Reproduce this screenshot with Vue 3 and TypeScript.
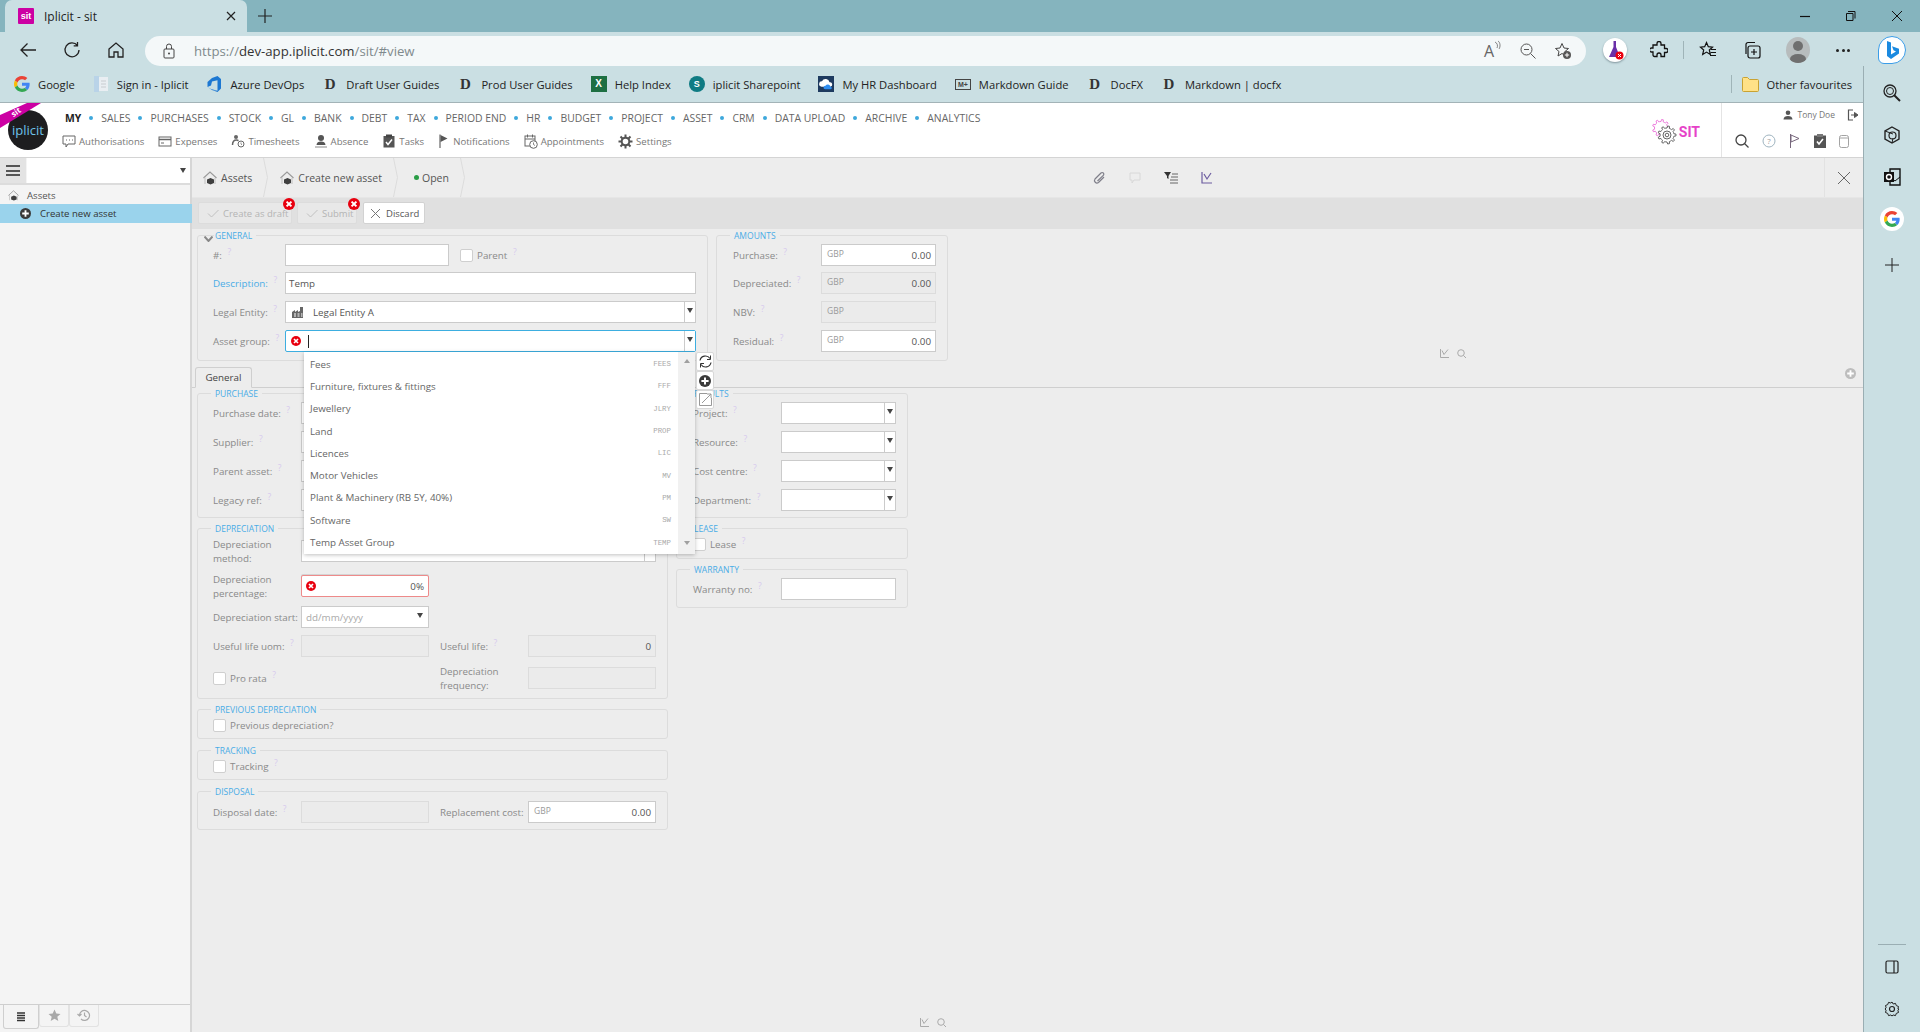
<template>
  <div class="page">
    <svg class="defs" width="0" height="0">
      <symbol id="err" viewBox="0 0 12 12">
        <circle cx="6" cy="6" r="6" fill="#e8000f" />
        <path d="M3.6 3.6l4.8 4.8M8.4 3.6l-4.8 4.8" stroke="#fff" stroke-width="2" />
      </symbol>
      <symbol id="plusdark" viewBox="0 0 12 12">
        <circle cx="6" cy="6" r="6" fill="#3a3a3a" />
        <path d="M6 2.400v7.200M2.400 6h7.200" stroke="#fff" stroke-width="2" />
      </symbol>
      <symbol id="house" viewBox="0 0 14 14">
        <path d="M.5 7L7 1l6.500 6" fill="none" stroke="#9a9a9a" stroke-width="1.100" />
        <path d="M2 6.500V13M12 7v6" stroke="#c4c4c4" stroke-width="1.100" />
        <path d="M4 8.500l3.500-1.500 3.500 1.500v3.500L7.500 13.500 4 12z" fill="#3f3f3f" />
      </symbol>
    </svg>

    <!-- browser chrome -->
    <div class="tabstrip">
      <div class="tab">
        <span class="favicon">sit</span>
        <span class="tab-title">Iplicit - sit</span>
        <svg class="tab-x" width="10" height="10" viewBox="0 0 10 10"><path d="M1 1l8 8M9 1l-8 8" stroke="#222" stroke-width="1.200" /></svg>
      </div>
      <svg class="tab-new" width="16" height="16" viewBox="0 0 16 16"><path d="M8 1v14M1 8h14" stroke="#222" stroke-width="1.200" /></svg>
      <div class="win">
        <svg width="12" height="12" viewBox="0 0 12 12"><path d="M1 6.500h10" stroke="#111" stroke-width="1.200" /></svg>
        <svg width="12" height="12" viewBox="0 0 12 12"><path d="M3 1.500h7v7M1.500 3.500h6.500v7h-6.500z" fill="none" stroke="#111" /></svg>
        <svg width="12" height="12" viewBox="0 0 12 12"><path d="M1 1l10 10M11 1l-10 10" stroke="#111" /></svg>
      </div>
    </div>

    <div class="toolbar">
      <svg class="tb-back" width="18" height="18" viewBox="0 0 18 18"><path d="M17 9H2M8.500 2.500L2 9l6.500 6.500" fill="none" stroke="#222" stroke-width="1.300" /></svg>
      <svg class="tb-reload" width="18" height="18" viewBox="0 0 18 18"><path d="M14.500 4.500A7 7 0 1 0 16 9M14.500 1v3.800h-3.800" fill="none" stroke="#222" stroke-width="1.300" /></svg>
      <svg class="tb-home" width="18" height="18" viewBox="0 0 18 18"><path d="M2 8l7-6 7 6v8h-5v-5H7v5H2z" fill="none" stroke="#222" stroke-width="1.300" /></svg>
      <div class="address">
        <svg width="14" height="16" viewBox="0 0 14 16"><rect x="2" y="6" width="10" height="9" rx="1" fill="none" stroke="#444" /><path d="M4.500 6V3.500a2.500 2.500 0 0 1 5 0V6" fill="none" stroke="#444" /><circle cx="7" cy="10.500" r="1" fill="#444" /></svg>
        <span class="url"><span class="dim">https://</span>dev-app.iplicit.com<span class="dim">/sit/#view</span></span>
        <div class="addr-right">
          <span class="aloud">A<svg width="7" height="12" viewBox="0 0 7 12"><path d="M1 2c2.500 1 3 4 2 6M4 1c2.500 1.500 2.500 6 1 8" fill="none" stroke="#666" stroke-width="0.800" /></svg></span>
          <svg width="16" height="16" viewBox="0 0 16 16"><circle cx="6.500" cy="6.500" r="5.500" fill="none" stroke="#555" /><path d="M10.500 10.500l5 5M4 6.500h5" stroke="#555" /></svg>
          <svg width="18" height="18" viewBox="0 0 18 18"><path d="M8 1.500l2 4.500 4.500.5-3.500 3 1 4.500-4-2.500-4 2.500 1-4.500-3.500-3 4.500-.5z" fill="none" stroke="#444" /><circle cx="13" cy="13" r="4" fill="#555" /><path d="M13 10.800v4.400M10.800 13h4.400" stroke="#fff" /></svg>
        </div>
      </div>
      <div class="tb-right">
        <span class="flask">
          <svg width="24" height="24" viewBox="0 0 24 24"><path d="M9.500 3h4M10.500 3v6L6 19h11l-4-10V3z" fill="#6a2fa8" /><circle cx="16.500" cy="17.500" r="4" fill="#e8000f" /><path d="M15 16l3 3M18 16l-3 3" stroke="#fff" /></svg>
        </span>
        <svg class="tb-ext" width="18" height="18" viewBox="0 0 18 18"><path d="M7 2.500a2 2 0 0 1 4 0V4h3.500v3.500H16a2 2 0 0 1 0 4h-1.500V15.500H11V14a2 2 0 0 0-4 0v1.500H4.500A1.500 1.500 0 0 1 3 14v-3H1.500a2 2 0 0 1 0-4H3V4h4z" fill="none" stroke="#111" stroke-width="1.300" /></svg>
        <span class="tb-sep"></span>
        <svg class="tb-fav" width="18" height="18" viewBox="0 0 18 18"><path d="M7.500 1.500l1.800 4.200 4.200.4-3.200 2.900 1 4.400-3.800-2.300-3.800 2.300 1-4.400L1.500 6.100l4.200-.4z" fill="none" stroke="#111" stroke-width="1.200" /><path d="M12 8.500h5M11.500 11.500h5.500M11 14.500h6" stroke="#111" /></svg>
        <svg class="tb-coll" width="18" height="18" viewBox="0 0 18 18"><rect x="5" y="5" width="12" height="12" rx="2" fill="none" stroke="#111" stroke-width="1.200" /><path d="M11 8v6M8 11h6M3 13V3.500A2 2 0 0 1 5 1.500h7" fill="none" stroke="#111" stroke-width="1.200" /></svg>
        <span class="avatar"><svg width="24" height="26" viewBox="0 0 24 26"><circle cx="12" cy="9" r="5" fill="#6f6f6f" /><ellipse cx="12" cy="22" rx="8" ry="5" fill="#6f6f6f" /></svg></span>
        <span class="tb-dots"><i></i><i></i><i></i></span>
        <span class="bing">
          <svg width="26" height="26" viewBox="0 0 26 26"><path d="M8 4l4 1.500v12l5-3-2.500-1.200-1.500-4 7 2.500v4.700L12 22l-4-3z" fill="#1b8ae0" /></svg>
        </span>
      </div>
    </div>

    <div class="below">
      <div class="app">
        <div class="bookmarks">
          <div v-for="b in bookmarks" :key="b.label" class="mark">
            <svg v-if="b.kind === 'google'" width="16" height="16" viewBox="0 0 48 48">
              <path fill="#EA4335" d="M24 9.500c3.540 0 6.710 1.220 9.210 3.600l6.850-6.850C35.900 2.380 30.470 0 24 0 14.620 0 6.510 5.380 2.560 13.220l7.980 6.190C12.430 13.720 17.740 9.500 24 9.500z" />
              <path fill="#4285F4" d="M46.980 24.550c0-1.570-.15-3.090-.38-4.550H24v9.020h12.940c-.58 2.960-2.260 5.480-4.780 7.180l7.730 6c4.510-4.180 7.090-10.360 7.090-17.650z" />
              <path fill="#FBBC05" d="M10.530 28.590c-.48-1.450-.76-2.990-.76-4.590s.27-3.140.76-4.590l-7.980-6.190C.92 16.460 0 20.120 0 24c0 3.880.92 7.540 2.560 10.780l7.970-6.190z" />
              <path fill="#34A853" d="M24 48c6.480 0 11.930-2.130 15.890-5.810l-7.730-6c-2.150 1.450-4.920 2.300-8.160 2.300-6.260 0-11.570-4.220-13.470-9.910l-7.980 6.190C6.510 42.620 14.620 48 24 48z" />
            </svg>
            <svg v-else-if="b.kind === 'page'" width="16" height="16" viewBox="0 0 16 16"><rect x="1" y="0" width="5" height="16" fill="#b9d3e8" /><rect x="6" y="1" width="9" height="14" fill="#e9eef2" /><path d="M8 5h5M8 8h5M8 11h5" stroke="#c8ccd0" /></svg>
            <svg v-else-if="b.kind === 'azure'" width="16" height="16" viewBox="0 0 16 16"><path d="M15 3v9.500L11.500 16 6 14l5.500.7V4.300L6 5.500 5 9.500 1.500 11V6L6 2 11.500 0z" fill="#1d78d2" /><path d="M1.500 11L6 14l5.500.7L5 13z" fill="#1d78d2" /></svg>
            <span v-else-if="b.kind === 'd'" class="ic-d">D</span>
            <span v-else-if="b.kind === 'excel'" class="ic-excel">X</span>
            <span v-else-if="b.kind === 'share'" class="ic-share">S</span>
            <svg v-else-if="b.kind === 'hr'" width="16" height="16" viewBox="0 0 18 18"><rect width="18" height="18" fill="#1e3a5f" /><path d="M4 12a3 3 0 0 1 .5-6A4.500 4.500 0 0 1 13 7a2.500 2.500 0 0 1 1 5z" fill="#fff" /><path d="M8 15a2 2 0 0 1 .5-4 3 3 0 0 1 5.500 1 1.500 1.500 0 0 1 0 3z" fill="#2e8df0" /></svg>
            <span v-else-if="b.kind === 'md'" class="ic-md">M+</span>
            <span class="mark-label">{{ b.label }}</span>
          </div>
          <div class="other">
            <svg width="17" height="16" viewBox="0 0 17 16"><path d="M.5 2.500a1 1 0 0 1 1-1h4l2 2h8a1 1 0 0 1 1 1v10a1 1 0 0 1-1 1h-14a1 1 0 0 1-1-1z" fill="#ffe187" stroke="#c9a232" /></svg>
            <span class="mark-label">Other favourites</span>
          </div>
        </div>

        <!-- iplicit header -->
        <div class="hdr">
          <div class="logo"><span>iplicit</span></div>
          <svg class="ribbon" width="42" height="26" viewBox="0 0 42 26"><path d="M0 12L27 0h14L0 25z" fill="#cc00a3" /></svg>
          <span class="ribbon-text">sit</span>
          <div class="hdr-nav">
            <div class="nav-main">
              <template v-for="(item, i) in modules" :key="item">
                <span v-if="i > 0" class="nav-dot"></span>
                <span :class="['nav-item', { on: item === 'MY' }]">{{ item }}</span>
              </template>
            </div>
            <div class="nav-sub">
              <span class="sub">
                <svg width="14" height="13" viewBox="0 0 14 13"><path d="M1 1h12v8H6l-2 3V9H1z" fill="none" stroke="#666" /><path d="M4 5h1M7 5h1M10 5h1" stroke="#666" /></svg>Authorisations
              </span>
              <span class="sub">
                <svg width="14" height="13" viewBox="0 0 14 13"><rect x="1" y="2" width="12" height="9" fill="none" stroke="#666" /><path d="M1 4.500h12" stroke="#666" stroke-width="1.500" /><path d="M3 8h3" stroke="#666" /></svg>Expenses
              </span>
              <span class="sub">
                <svg width="14" height="14" viewBox="0 0 14 14"><circle cx="5" cy="3" r="2" fill="#666" /><path d="M1.500 11c0-4 2-5 4-5 .8 0 1.500.2 2 .6" fill="none" stroke="#666" stroke-width="1.500" /><circle cx="10" cy="10" r="3" fill="none" stroke="#666" /><path d="M10 8.500V10l1 1" stroke="#666" stroke-width="0.700" fill="none" /></svg>Timesheets
              </span>
              <span class="sub">
                <svg width="14" height="14" viewBox="0 0 14 14"><circle cx="7" cy="4" r="3" fill="#555" /><path d="M2.500 11c0-2.500 2-3.500 4.500-3.500s4.500 1 4.500 3.500z" fill="#555" /><path d="M1 13h12" stroke="#888" /></svg>Absence
              </span>
              <span class="sub">
                <svg width="14" height="14" viewBox="0 0 14 14"><path d="M1.500 2h11v11.500h-11z" fill="#555" /><path d="M4 0.500h6v3H4z" fill="#444" /><path d="M4 8l2 2.500 4-5" fill="none" stroke="#fff" stroke-width="1.500" /></svg>Tasks
              </span>
              <span class="sub">
                <svg width="12" height="14" viewBox="0 0 12 14"><path d="M2 0.500V14" stroke="#666" stroke-width="1.200" /><path d="M2.500 1l7 3.500-7 3.500z" fill="#555" /></svg>Notifications
              </span>
              <span class="sub">
                <svg width="14" height="15" viewBox="0 0 14 15"><rect x="1" y="2" width="10" height="10" fill="none" stroke="#666" /><path d="M1 5h10M3.500 0.500v3M8.500 0.500v3" stroke="#666" /><circle cx="9.500" cy="10.500" r="3.800" fill="#fff" stroke="#666" /><path d="M9.500 8.500v2l1.500 1" fill="none" stroke="#666" stroke-width="0.800" /></svg>Appointments
              </span>
              <span class="sub">
                <svg width="15" height="15" viewBox="0 0 15 15"><circle cx="7.500" cy="7.500" r="3.800" fill="none" stroke="#555" stroke-width="2" /><path d="M7.500 .5v3M7.500 11.500v3M.5 7.500h3M11.500 7.500h3M2.500 2.500l2.200 2.200M10.300 10.300l2.200 2.200M12.500 2.500l-2.200 2.200M4.700 10.300l-2.200 2.200" stroke="#555" stroke-width="2" /></svg>Settings
              </span>
            </div>
          </div>
          <div class="env">
            <svg width="26" height="28" viewBox="0 0 26 28">
              <path :d="gearPink" fill="none" stroke="#ea6fd8" stroke-width="0.900" />
              <path :d="gearGrey" fill="#fff" stroke="#666" stroke-width="1" />
              <circle cx="15" cy="17" r="4" fill="none" stroke="#666" /><circle cx="15" cy="17" r="1.800" fill="none" stroke="#666" />
            </svg>
            <span>SIT</span>
          </div>
          <div class="user-box">
            <div class="user-line">
              <svg width="10" height="10" viewBox="0 0 10 10"><circle cx="5" cy="2.800" r="2.300" fill="#555" /><path d="M.5 9.500c0-2.500 2-3.500 4.500-3.500s4.500 1 4.500 3.500z" fill="#555" /></svg>
              <span class="user-name">Tony Doe</span>
              <svg class="logout" width="12" height="12" viewBox="0 0 12 12"><path d="M6 1H1.500v10H6" fill="none" stroke="#555" stroke-width="1.200" /><path d="M4 6h4.500M7.500 3.500L11 6l-3.500 2.500z" fill="#555" stroke="#555" /></svg>
            </div>
            <div class="user-icons">
              <svg width="14" height="14" viewBox="0 0 14 14"><circle cx="6" cy="6" r="5" fill="none" stroke="#444" stroke-width="1.300" /><path d="M9.500 9.500l4 4" stroke="#444" stroke-width="1.300" /></svg>
              <svg width="14" height="14" viewBox="0 0 14 14"><circle cx="7" cy="7" r="6" fill="none" stroke="#9fb4c0" /><text x="7" y="10" text-anchor="middle" font-size="8" font-family="Open Sans" fill="#9a9a9a">?</text></svg>
              <svg width="12" height="14" viewBox="0 0 12 14"><path d="M1.500 0v14" stroke="#77677c" /><path d="M2 1l8 3.500-8 3.500z" fill="none" stroke="#77677c" /></svg>
              <svg width="12" height="14" viewBox="0 0 12 14"><path d="M0 1.500h12V14H0z" fill="#555" /><path d="M3 0h6v3H3z" fill="#777" /><path d="M3 7.500l2 2.500 4-5" fill="none" stroke="#fff" stroke-width="1.600" /></svg>
              <svg width="10" height="13" viewBox="0 0 10 13"><rect x="0.500" y="0.500" width="9" height="12" rx="2" fill="none" stroke="#a3a3a3" /><path d="M0.500 3h9" stroke="#a3a3a3" /></svg>
            </div>
          </div>
        </div>

        <div class="work">
          <!-- left tree -->
          <div class="left">
            <div class="left-top">
              <div class="burger"><i></i><i></i><i></i></div>
              <div class="left-combo"><span class="caret"></span></div>
            </div>
            <div class="tree-row root">
              <svg width="11" height="11"><use href="#house" /></svg>
              <span>Assets</span>
            </div>
            <div class="tree-row sel">
              <svg width="11" height="11"><use href="#plusdark" /></svg>
              <span>Create new asset</span>
            </div>
            <div class="left-tabs">
              <span class="ltab active">
                <svg width="10" height="10" viewBox="0 0 10 10"><path d="M1 1h8M1 3.500h8M1 6h8M1 8.500h8" stroke="#333" stroke-width="1.500" /></svg>
              </span>
              <span class="ltab">
                <svg width="13" height="13" viewBox="0 0 13 13"><path d="M6.500 .5l1.800 4 4.200.4-3.200 2.900 1 4.200-3.800-2.200-3.800 2.200 1-4.200L.5 4.900l4.200-.4z" fill="#a9a9a9" /></svg>
              </span>
              <span class="ltab">
                <svg width="14" height="13" viewBox="0 0 14 13"><path d="M2.500 6.500a5 5 0 1 1 1.500 3.500M.5 5l2 2 2-2M7.500 3.500v3l2 1.500" fill="none" stroke="#a9a9a9" stroke-width="1.200" /></svg>
              </span>
            </div>
          </div>

          <div class="main">
            <div class="crumbs">
              <span class="crumb"><svg width="14" height="14"><use href="#house" /></svg>Assets</span>
              <svg class="chev" width="5" height="39" viewBox="0 0 5 39"><path d="M.5 0L4.500 19.500.5 39" fill="none" stroke="#dcdcdc" /></svg>
              <span class="crumb two"><svg width="14" height="14"><use href="#house" /></svg>Create new asset</span>
              <svg class="chev" width="5" height="39" viewBox="0 0 5 39"><path d="M.5 0L4.500 19.500.5 39" fill="none" stroke="#dcdcdc" /></svg>
              <span class="crumb three"><i class="green"></i>Open</span>
              <svg class="chev" width="5" height="39" viewBox="0 0 5 39"><path d="M.5 0L4.500 19.500.5 39" fill="none" stroke="#dcdcdc" /></svg>
              <div class="crumb-tools">
                <svg width="14" height="14" viewBox="0 0 14 14"><path d="M12 6l-5.500 5.500a2.500 2.500 0 0 1-3.500-3.500L9 2a1.600 1.600 0 0 1 2.300 2.300L5.500 10" fill="none" stroke="#7f7f8a" stroke-width="1.200" /></svg>
                <svg width="12" height="12" viewBox="0 0 12 12"><path d="M1 1h10v7H5l-2 3V8H1z" fill="none" stroke="#d8d8d8" /></svg>
                <svg width="14" height="13" viewBox="0 0 14 13"><path d="M0 1h7L4.500 5v3L3 7V5z" fill="#333" /><path d="M8 3h6M7 6h7M6 9h8M6 12h8" stroke="#666" /></svg>
                <svg width="11" height="12" viewBox="0 0 11 12"><path d="M1 0v11h10M3 2l3 5 4-6" fill="none" stroke="#6c5ca0" stroke-width="1.200" /></svg>
              </div>
              <div class="close-cell">
                <svg width="14" height="14" viewBox="0 0 14 14"><path d="M1 1l12 12M13 1L1 13" stroke="#666" /></svg>
              </div>
            </div>

            <div class="actions">
              <button class="btn off draft">
                <svg width="12" height="9" viewBox="0 0 12 9"><path d="M1 4.500l3.500 3.500 7-7" fill="none" stroke="#c0c0c0" /></svg>Create as draft
                <svg class="badge" width="12" height="12"><use href="#err" /></svg>
              </button>
              <button class="btn off submit">
                <svg width="12" height="9" viewBox="0 0 12 9"><path d="M1 4.500l3.500 3.500 7-7" fill="none" stroke="#c0c0c0" /></svg>Submit
                <svg class="badge" width="12" height="12"><use href="#err" /></svg>
              </button>
              <button class="btn discard">
                <svg width="11" height="11" viewBox="0 0 11 11"><path d="M1 1l9 9M10 1l-9 9" stroke="#777" /></svg>Discard
              </button>
            </div>

            <div class="content">
              <div class="top">
                <div class="fs general">
                  <svg class="fold" width="9" height="6" viewBox="0 0 9 6"><path d="M.5 .5L4.500 5l4-4.500" fill="none" stroke="#888" stroke-width="2" /></svg>
                  <span class="legend gen-legend">GENERAL</span>
                  <div class="rows">
                    <div class="row first">
                      <label class="lab short">#: <sup class="q">?</sup></label>
                      <span class="inp w164"></span>
                      <span class="chk parent-chk"></span>
                      <span class="chk-text">Parent <sup class="q">?</sup></span>
                    </div>
                    <div class="row">
                      <label class="lab short blue">Description: <sup class="q">?</sup></label>
                      <span class="inp grow val">Temp</span>
                    </div>
                    <div class="row">
                      <label class="lab short">Legal Entity: <sup class="q">?</sup></label>
                      <span class="inp grow combo val">
                        <svg class="factory" width="12" height="11" viewBox="0 0 12 11"><path d="M0 11V5l3-2v2l3-2v2l2-1V0h3v11z" fill="#666" /><path d="M2 7h2M5.500 7h2M9 7h1.500M2 9h2M5.500 9h2M9 9h1.500" stroke="#fff" /></svg>
                        Legal Entity A
                        <span class="drop"><span class="caret"></span></span>
                      </span>
                    </div>
                    <div class="row">
                      <label class="lab short">Asset group: <sup class="q">?</sup></label>
                      <span class="inp grow combo focus">
                        <svg class="err-inline" width="10" height="10"><use href="#err" /></svg>
                        <i class="cursor"></i>
                        <span class="drop"><span class="caret"></span></span>
                        <div class="popup">
                          <div class="pop-list">
                            <div v-for="g in groups" :key="g.code" class="pop-item">
                              <span>{{ g.name }}</span>
                              <span class="pop-code">{{ g.code }}</span>
                            </div>
                          </div>
                          <div class="pop-scroll">
                            <span class="up"></span>
                            <span class="down"></span>
                          </div>
                        </div>
                        <div class="pop-side">
                          <span class="side-btn"><svg width="13" height="13" viewBox="0 0 13 13"><path d="M1 5.500a5.500 5.500 0 0 1 10-2M12 7.500a5.500 5.500 0 0 1-10 2" fill="none" stroke="#333" stroke-width="1.200" /><path d="M11.500 0.500v4h-3.500M1.500 12.500v-4H5" fill="none" stroke="#333" /></svg></span>
                          <span class="side-btn"><svg width="12" height="12"><use href="#plusdark" /></svg></span>
                          <span class="side-btn"><svg width="13" height="13" viewBox="0 0 13 13"><path d="M8 .5H.5v12h12V5M3 10L12 1M8 1h4v4" fill="none" stroke="#999" /></svg></span>
                        </div>
                      </span>
                    </div>
                  </div>
                </div>

                <div class="fs amounts">
                  <span class="legend">AMOUNTS</span>
                  <div class="rows">
                    <div class="row first">
                      <label class="lab">Purchase: <sup class="q">?</sup></label>
                      <span class="inp money"><em>GBP</em><b>0.00</b></span>
                    </div>
                    <div class="row">
                      <label class="lab">Depreciated: <sup class="q">?</sup></label>
                      <span class="inp money ro"><em>GBP</em><b>0.00</b></span>
                    </div>
                    <div class="row">
                      <label class="lab">NBV: <sup class="q">?</sup></label>
                      <span class="inp money ro"><em>GBP</em></span>
                    </div>
                    <div class="row">
                      <label class="lab">Residual: <sup class="q">?</sup></label>
                      <span class="inp money"><em>GBP</em><b>0.00</b></span>
                    </div>
                  </div>
                </div>

                <div class="mini-tools">
                  <svg width="9" height="9" viewBox="0 0 9 9"><path d="M.5 0v8.500H9M2 1.500l2 4 4-5" fill="none" stroke="#aaa" /></svg>
                  <svg width="9" height="9" viewBox="0 0 9 9"><circle cx="4" cy="4" r="3.300" fill="none" stroke="#aaa" /><path d="M6.500 6.500L9 9" stroke="#aaa" /></svg>
                </div>
              </div>

              <div class="tabbar">
                <span class="tabbtn">General</span>
                <svg class="tab-plus" width="11" height="11" viewBox="0 0 12 12"><circle cx="6" cy="6" r="6" fill="#bdbdbd" /><path d="M6 2.400v7.200M2.400 6h7.200" stroke="#fff" stroke-width="2" /></svg>
              </div>

              <div class="lower">
                <div class="col-left">
                  <div class="fs purchase">
                    <span class="legend">PURCHASE</span>
                    <div class="rows">
                      <div class="row"><label class="lab">Purchase date: <sup class="q">?</sup></label><span class="inp w129"></span></div>
                      <div class="row"><label class="lab">Supplier: <sup class="q">?</sup></label><span class="inp grow"></span></div>
                      <div class="row"><label class="lab">Parent asset: <sup class="q">?</sup></label><span class="inp grow"></span></div>
                      <div class="row"><label class="lab">Legacy ref: <sup class="q">?</sup></label><span class="inp w129"></span></div>
                    </div>
                  </div>

                  <div class="fs deprec">
                    <span class="legend">DEPRECIATION</span>
                    <div class="rows">
                      <div class="row"><label class="lab">Depreciation method:</label><span class="inp grow combo"><span class="drop"></span></span></div>
                      <div class="row m13">
                        <label class="lab">Depreciation percentage:</label>
                        <span class="inp w129 bad"><svg class="err-inline" width="10" height="10"><use href="#err" /></svg><b>0%</b></span>
                      </div>
                      <div class="row m9">
                        <label class="lab nowrap">Depreciation start:</label>
                        <span class="inp w129 date">dd/mm/yyyy<span class="caret"></span></span>
                      </div>
                      <div class="row">
                        <label class="lab">Useful life uom: <sup class="q">?</sup></label>
                        <span class="inp w129 ro"></span>
                        <label class="lab second">Useful life: <sup class="q">?</sup></label>
                        <span class="inp w129 ro num">0</span>
                      </div>
                      <div class="row m10">
                        <span class="chk"></span>
                        <span class="chk-text pro">Pro rata <sup class="q">?</sup></span>
                        <label class="lab second">Depreciation frequency:</label>
                        <span class="inp w129 ro"></span>
                      </div>
                    </div>
                  </div>

                  <div class="fs thin prev">
                    <span class="legend">PREVIOUS DEPRECIATION</span>
                    <div class="row tight"><span class="chk"></span><span class="chk-text">Previous depreciation?</span></div>
                  </div>

                  <div class="fs thin track">
                    <span class="legend">TRACKING</span>
                    <div class="row tight"><span class="chk"></span><span class="chk-text">Tracking <sup class="q">?</sup></span></div>
                  </div>

                  <div class="fs disposal">
                    <span class="legend">DISPOSAL</span>
                    <div class="row">
                      <label class="lab">Disposal date: <sup class="q">?</sup></label>
                      <span class="inp w129 ro"></span>
                      <label class="lab second nowrap">Replacement cost:</label>
                      <span class="inp money w129"><em>GBP</em><b>0.00</b></span>
                    </div>
                  </div>
                </div>

                <div class="col-right">
                  <div class="fs results">
                    <span class="legend">RESULTS</span>
                    <div class="rows">
                      <div v-for="r in results" :key="r" class="row">
                        <label class="lab">{{ r }}: <sup class="q">?</sup></label>
                        <span class="inp grow combo"><span class="drop"><span class="caret"></span></span></span>
                      </div>
                    </div>
                  </div>
                  <div class="fs thin lease">
                    <span class="legend">LEASE</span>
                    <div class="row tight"><span class="chk"></span><span class="chk-text">Lease <sup class="q">?</sup></span></div>
                  </div>
                  <div class="fs warranty">
                    <span class="legend">WARRANTY</span>
                    <div class="row"><label class="lab">Warranty no: <sup class="q">?</sup></label><span class="inp grow"></span></div>
                  </div>
                </div>
              </div>

              <div class="bottom-tools">
                <svg width="9" height="9" viewBox="0 0 9 9"><path d="M.5 0v8.500H9M2 1.500l2 4 4-5" fill="none" stroke="#aaa" /></svg>
                <svg width="9" height="9" viewBox="0 0 9 9"><circle cx="4" cy="4" r="3.300" fill="none" stroke="#aaa" /><path d="M6.500 6.500L9 9" stroke="#aaa" /></svg>
              </div>
            </div>
          </div>
        </div>
      </div>

      <!-- edge sidebar -->
      <div class="edge">
        <svg width="18" height="18" viewBox="0 0 18 18"><circle cx="7" cy="7" r="6" fill="none" stroke="#222" stroke-width="1.300" /><circle cx="7" cy="7" r="3.500" fill="none" stroke="#222" /><path d="M11 11l6 6" stroke="#222" stroke-width="2" /></svg>
        <svg width="18" height="18" viewBox="0 0 18 18"><path d="M9 1l7 4v8l-7 4-7-4V5z" fill="none" stroke="#222" stroke-width="1.400" /><circle cx="9.500" cy="9.500" r="3.500" fill="none" stroke="#222" stroke-width="1.200" /><path d="M2 5l8 3M9 17l1-5" stroke="#222" /></svg>
        <svg width="18" height="18" viewBox="0 0 18 18"><path d="M7 1h10v16H7z" fill="none" stroke="#111" stroke-width="1.400" /><path d="M7 9l5 4 5-4" fill="none" stroke="#111" /><rect x="1" y="4" width="10" height="10" fill="#111" /><circle cx="6" cy="9" r="2.500" fill="none" stroke="#fff" stroke-width="1.400" /></svg>
        <span class="g-ball">
          <svg width="16" height="16" viewBox="0 0 48 48">
            <path fill="#EA4335" d="M24 9.500c3.540 0 6.710 1.220 9.210 3.600l6.850-6.850C35.900 2.380 30.470 0 24 0 14.620 0 6.510 5.380 2.560 13.220l7.980 6.190C12.430 13.720 17.740 9.500 24 9.500z" />
            <path fill="#4285F4" d="M46.980 24.550c0-1.570-.15-3.090-.38-4.550H24v9.020h12.940c-.58 2.960-2.260 5.480-4.780 7.180l7.730 6c4.510-4.180 7.090-10.360 7.090-17.650z" />
            <path fill="#FBBC05" d="M10.530 28.590c-.48-1.450-.76-2.990-.76-4.590s.27-3.140.76-4.590l-7.980-6.190C.92 16.460 0 20.120 0 24c0 3.880.92 7.540 2.560 10.780l7.970-6.190z" />
            <path fill="#34A853" d="M24 48c6.480 0 11.930-2.130 15.890-5.810l-7.730-6c-2.150 1.450-4.920 2.300-8.160 2.300-6.260 0-11.570-4.220-13.470-9.910l-7.980 6.190C6.510 42.620 14.620 48 24 48z" />
          </svg>
        </span>
        <svg class="edge-plus" width="14" height="14" viewBox="0 0 14 14"><path d="M7 0v14M0 7h14" stroke="#222" /></svg>
        <div class="edge-foot">
          <i class="edge-line"></i>
          <svg width="14" height="14" viewBox="0 0 14 14"><rect x="1" y="1" width="12" height="12" rx="1.500" fill="none" stroke="#222" stroke-width="1.200" /><path d="M9 1v12" stroke="#222" stroke-width="1.200" /></svg>
          <svg width="16" height="16" viewBox="0 0 16 16"><circle cx="8" cy="8" r="2.500" fill="none" stroke="#222" stroke-width="1.200" /><path d="M8 1l1.200 2 2.300-.6.800 2.200 2.200.9-.6 2.300L15 8l-1.100 1.200.6 2.300-2.200.9-.8 2.200-2.300-.6L8 15l-1.200-1-2.300.6-.8-2.200-2.200-.9.600-2.300L1 8l1.100-1.200-.6-2.300 2.200-.9.800-2.200 2.300.6z" fill="none" stroke="#222" /></svg>
        </div>
      </div>
    </div>
  </div>
</template>

<script setup lang="ts">
interface Bookmark {
  label: string
  kind: string
}

const bookmarks: Bookmark[] = [
  { label: 'Google', kind: 'google' },
  { label: 'Sign in - Iplicit', kind: 'page' },
  { label: 'Azure DevOps', kind: 'azure' },
  { label: 'Draft User Guides', kind: 'd' },
  { label: 'Prod User Guides', kind: 'd' },
  { label: 'Help Index', kind: 'excel' },
  { label: 'iplicit Sharepoint', kind: 'share' },
  { label: 'My HR Dashboard', kind: 'hr' },
  { label: 'Markdown Guide', kind: 'md' },
  { label: 'DocFX', kind: 'd' },
  { label: 'Markdown | docfx', kind: 'd' },
]

const modules = [
  'MY', 'SALES', 'PURCHASES', 'STOCK', 'GL', 'BANK', 'DEBT', 'TAX', 'PERIOD END', 'HR',
  'BUDGET', 'PROJECT', 'ASSET', 'CRM', 'DATA UPLOAD', 'ARCHIVE', 'ANALYTICS',
]

const groups = [
  { name: 'Fees', code: 'FEES' },
  { name: 'Furniture, fixtures & fittings', code: 'FFF' },
  { name: 'Jewellery', code: 'JLRY' },
  { name: 'Land', code: 'PROP' },
  { name: 'Licences', code: 'LIC' },
  { name: 'Motor Vehicles', code: 'MV' },
  { name: 'Plant & Machinery (RB 5Y, 40%)', code: 'PM' },
  { name: 'Software', code: 'SW' },
  { name: 'Temp Asset Group', code: 'TEMP' },
]

const results = ['Project', 'Resource', 'Cost centre', 'Department']

// outline of a cog, used by the SIT logo
function gear(cx: number, cy: number, outer: number, inner: number, teeth: number): string {
  const step = (Math.PI * 2) / teeth
  const pts: string[] = []
  for (let i = 0; i < teeth; i++) {
    const a = i * step
    const corners = [
      [inner, a - step * 0.5],
      [inner, a - step * 0.25],
      [outer, a - step * 0.15],
      [outer, a + step * 0.15],
      [inner, a + step * 0.25],
    ]
    for (const [r, t] of corners) {
      pts.push(`${(cx + r * Math.cos(t)).toFixed(2)} ${(cy + r * Math.sin(t)).toFixed(2)}`)
    }
  }
  return `M${pts.join('L')}Z`
}

const gearPink = gear(9, 10, 8.5, 6.5, 9)
const gearGrey = gear(15, 17, 9, 7, 9)
</script>

<style>
html,
body {
  margin: 0;
  padding: 0;
  overflow: hidden;
}
</style>

<style scoped>
.page {
  width: 1920px;
  height: 1032px;
  display: flex;
  flex-direction: column;
  overflow: hidden;
  font-family: 'Open Sans', sans-serif;
  font-size: 9.8px;
  color: #555;
  background: #cadfe3;
}
.defs {
  position: absolute;
}
svg {
  flex: none;
  display: block;
}

/* browser */
.tabstrip {
  height: 32px;
  flex: none;
  background: #85b4be;
  display: flex;
  align-items: flex-end;
  padding-left: 5px;
}
.tab {
  width: 242px;
  height: 32px;
  box-sizing: border-box;
  background: #cadfe3;
  border-radius: 7px 7px 0 0;
  display: flex;
  align-items: center;
  padding: 0 11px 0 13px;
}
.favicon {
  width: 16px;
  height: 16px;
  background: #cc00a3;
  color: #fff;
  font: 700 9px/16px 'Liberation Sans', sans-serif;
  text-align: center;
  border-radius: 1px;
}
.tab-title {
  margin-left: 10px;
  font: 12px 'Open Sans', sans-serif;
  color: #222;
  flex: 1;
}
.tab-new {
  margin: 0 0 8px 10px;
}
.win {
  margin-left: auto;
  align-self: center;
  display: flex;
  gap: 34px;
  margin-right: 17px;
}
.toolbar {
  height: 34px;
  flex: none;
  display: flex;
  align-items: flex-end;
  position: relative;
  background: #cadfe3;
}
.tb-back,
.tb-reload,
.tb-home {
  align-self: center;
  margin-top: 2px;
}
.tb-back {
  margin-left: 19px;
}
.tb-reload {
  margin-left: 26px;
}
.tb-home {
  margin-left: 26px;
}
.address {
  margin-left: 20px;
  width: 1441px;
  flex: none;
  height: 30px;
  background: #f4f8f9;
  border-radius: 15px;
  display: flex;
  align-items: center;
  padding-left: 17px;
  box-sizing: border-box;
}
.url {
  margin-left: 18px;
  font: 13.2px 'Open Sans', sans-serif;
  color: #333;
}
.dim {
  color: #7f8a8d;
}
.addr-right {
  margin-left: auto;
  margin-right: 14px;
  display: flex;
  align-items: center;
  gap: 18px;
}
.aloud {
  display: flex;
  font: 16px 'Open Sans', sans-serif;
  color: #666;
  width: 18px;
}
.tb-right {
  align-self: center;
  margin-top: 2px;
  margin-left: 17px;
  display: flex;
  align-items: center;
}
.flask {
  width: 24px;
  height: 24px;
  background: #fff;
  border-radius: 50%;
  box-shadow: 0 1px 2px rgba(80, 100, 110, 0.6);
}
.tb-ext {
  margin-left: 23px;
}
.tb-sep {
  width: 1px;
  height: 18px;
  background: #9fb4b8;
  margin-left: 15px;
}
.tb-fav {
  margin-left: 15px;
}
.tb-coll {
  margin-left: 26px;
}
.avatar {
  margin-left: 25px;
  width: 24px;
  height: 26px;
  border-radius: 50%;
  background: #b7bcbd;
  overflow: hidden;
}
.tb-dots {
  margin-left: 26px;
  width: 14px;
  display: flex;
  justify-content: space-between;
}
.tb-dots i {
  width: 3px;
  height: 3px;
  border-radius: 50%;
  background: #222;
}
.bing {
  margin-left: 28px;
  width: 28px;
  height: 28px;
  background: #fff;
  border-radius: 50% 50% 50% 6px;
  border: 1px solid #3b9de8;
  box-sizing: border-box;
}
.below {
  flex: 1;
  display: flex;
  min-height: 0;
}
.app {
  width: 1863px;
  flex: none;
  display: flex;
  flex-direction: column;
  border-right: 1px solid #9aaeb3;
  box-sizing: content-box;
}
.bookmarks {
  height: 36px;
  flex: none;
  display: flex;
  align-items: center;
  padding-left: 14px;
  border-bottom: 1px solid #a3b3b7;
  font: 11.2px 'Open Sans', sans-serif;
  color: #222;
}
.mark {
  display: flex;
  align-items: center;
  gap: 8px;
  margin-right: 18px;
  white-space: nowrap;
}
.ic-d {
  width: 16px;
  height: 16px;
  font: 700 15px/16px 'Liberation Serif', serif;
  color: #333;
  text-align: center;
}
.ic-excel {
  width: 16px;
  height: 16px;
  background: #1d6f42;
  color: #fff;
  font: 700 10px/16px 'Liberation Sans', sans-serif;
  text-align: center;
}
.ic-share {
  width: 16px;
  height: 16px;
  border-radius: 50%;
  background: #0f7b83;
  color: #fff;
  font: 700 9px/16px 'Liberation Sans', sans-serif;
  text-align: center;
}
.ic-md {
  width: 16px;
  height: 11px;
  border: 1px solid #444;
  box-sizing: border-box;
  font: 700 7px/9px 'Liberation Sans', sans-serif;
  color: #444;
  text-align: center;
}
.other {
  margin-left: auto;
  margin-right: 11px;
  display: flex;
  align-items: center;
  gap: 8px;
  position: relative;
}
.other::before {
  content: '';
  width: 1px;
  height: 18px;
  background: #9fb4b8;
  margin-right: 2px;
}

/* iplicit header */
.hdr {
  height: 54px;
  flex: none;
  background: #fff;
  border-bottom: 1px solid #d4d4d4;
  display: flex;
  position: relative;
}
.logo {
  width: 40px;
  height: 40px;
  border-radius: 50%;
  background: #1d1d1f;
  margin: 7px 0 0 8px;
  color: #6ec3ea;
  font: 13px/40px 'Open Sans', sans-serif;
  text-align: center;
  flex: none;
}
.ribbon {
  position: absolute;
  left: 0;
  top: 0;
}
.ribbon-text {
  position: absolute;
  left: 11px;
  top: 4px;
  color: #fff;
  font: 700 8px/10px 'Open Sans', sans-serif;
  transform: rotate(-35deg);
}
.hdr-nav {
  margin-left: 17px;
  display: flex;
  flex-direction: column;
}
.nav-main {
  height: 30px;
  display: flex;
  align-items: center;
  box-sizing: border-box;
  gap: 8px;
  font-size: 10.4px;
  color: #666;
  white-space: nowrap;
}
.nav-item.on {
  font-weight: 700;
  color: #222;
}
.nav-dot {
  width: 4px;
  height: 4px;
  border-radius: 50%;
  background: #3ea8dc;
}
.nav-sub {
  height: 16px;
  display: flex;
  margin-left: -3px;
  gap: 14px;
  font-size: 9.6px;
  color: #777;
  white-space: nowrap;
}
.sub {
  display: flex;
  align-items: center;
  gap: 3px;
}
.env {
  margin-left: auto;
  display: flex;
  align-items: center;
  gap: 1px;
  margin-right: 21px;
  padding-top: 3px;
  font: 700 14px 'Roboto', sans-serif;
  color: #e642c8;
}
.user-box {
  width: 142px;
  border-left: 1px solid #e4e4e4;
  box-sizing: border-box;
  display: flex;
  flex-direction: column;
  padding-right: 4px;
}
.user-line {
  height: 22px;
  padding-top: 1px;
  box-sizing: border-box;
  display: flex;
  align-items: center;
  justify-content: flex-end;
  gap: 4px;
  font-size: 8.5px;
  color: #777;
}
.user-name {
  margin-right: 8px;
}
.user-icons {
  flex: 1;
  display: flex;
  align-items: center;
  gap: 13px;
  padding: 0 0 0 13px;
}

/* workspace */
.work {
  flex: 1;
  display: flex;
  min-height: 0;
}
.left {
  width: 192px;
  flex: none;
  box-sizing: border-box;
  background: #f4f4f4;
  border-right: 2px solid #d6d6d6;
  display: flex;
  flex-direction: column;
  font-size: 9.6px;
  color: #555;
}
.left-top {
  height: 27px;
  flex: none;
  display: flex;
  border-bottom: 2px solid #dcdcdc;
  box-sizing: border-box;
}
.burger {
  width: 26px;
  background: #e3e3e3;
  display: flex;
  flex-direction: column;
  justify-content: center;
  gap: 2.500px;
  padding: 0 6px;
  box-sizing: border-box;
}
.burger i {
  height: 2px;
  background: #555;
}
.left-combo {
  flex: 1;
  background: #fff;
  margin-left: 1px;
  display: flex;
  align-items: center;
  justify-content: flex-end;
  padding-right: 4px;
}
.caret {
  width: 0;
  height: 0;
  border-left: 3.500px solid transparent;
  border-right: 3.500px solid transparent;
  border-top: 5px solid #444;
  display: block;
}
.tree-row {
  display: flex;
  align-items: center;
  gap: 8px;
  height: 19px;
  padding-left: 8px;
}
.tree-row.root {
  padding-top: 1px;
  box-sizing: border-box;
}
.tree-row.sel {
  background: #9ad3ec;
  color: #333;
  padding-left: 20px;
  margin-right: -2px;
  gap: 9px;
}
.left-tabs {
  margin-top: auto;
  height: 28px;
  flex: none;
  box-sizing: border-box;
  border-top: 1px solid #cfcfcf;
  display: flex;
  padding-left: 3px;
}
.ltab {
  width: 30px;
  height: 22px;
  border: 1px solid #e2e2e2;
  border-top: 0;
  border-radius: 0 0 3px 3px;
  display: flex;
  align-items: center;
  justify-content: center;
  box-sizing: border-box;
}
.ltab.active {
  width: 36px;
  height: 24px;
  border-color: #cfcfcf;
}
.main {
  flex: 1;
  min-width: 0;
  display: flex;
  flex-direction: column;
  background: #ededed;
}
.crumbs {
  height: 39px;
  flex: none;
  display: flex;
  align-items: center;
  font-size: 10.5px;
  color: #555;
  padding-left: 11px;
}
.crumb {
  display: flex;
  align-items: center;
  gap: 4px;
}
.crumb.two {
  margin-left: 12px;
}
.crumb.three {
  margin-left: 16px;
  gap: 3px;
}
.chev {
  margin-left: 11px;
}
.green {
  width: 5px;
  height: 5px;
  border-radius: 50%;
  background: #2a9d46;
}
.crumb-tools {
  margin-left: 627px;
  display: flex;
  align-items: center;
  gap: 23px;
}
.close-cell {
  margin-left: auto;
  width: 39px;
  height: 39px;
  border-left: 1px solid #e2e2e2;
  box-sizing: border-box;
  display: flex;
  align-items: center;
  justify-content: center;
}
.actions {
  height: 32px;
  flex: none;
  background: #e0e0e0;
  display: flex;
  gap: 5px;
  padding: 4px 0 0 6px;
  box-sizing: border-box;
  border-top: 1px solid #e6e6e6;
}
.btn {
  height: 22px;
  box-sizing: border-box;
  border: 1px solid #d2d2d2;
  border-radius: 2px;
  background: #fff;
  font: 9.5px 'Open Sans', sans-serif;
  color: #555;
  display: flex;
  align-items: center;
  gap: 4px;
  padding: 0 0 0 8px;
  position: relative;
  white-space: nowrap;
}
.btn.off {
  background: #e8e8e8;
  border-color: #dcdcdc;
  color: #b4b4b4;
}
.btn.draft {
  width: 94px;
}
.btn.submit {
  width: 60px;
}
.btn.discard {
  width: 62px;
  padding-left: 6px;
  margin-left: 1px;
  gap: 5px;
}
.badge {
  position: absolute;
  top: -5px;
  right: -4px;
}

/* form */
.content {
  flex: 1;
  display: flex;
  flex-direction: column;
  min-height: 0;
}
.top {
  height: 126px;
  flex: none;
  display: flex;
  gap: 8px;
  margin: 6px 0 0 5px;
}
.fs {
  position: relative;
  border: 1px solid #dcdcdc;
  border-radius: 3px;
  box-sizing: border-box;
  padding: 8px 11px 0 15px;
}
.legend {
  position: absolute;
  left: 13px;
  top: -6px;
  padding: 0 4px;
  background: #ededed;
  font-size: 8.5px;
  line-height: 12px;
  color: #4aace6;
  white-space: nowrap;
}
.gen-legend {
  left: 16px;
  padding-left: 1px;
}
.fold {
  position: absolute;
  left: 6px;
  top: 0;
  z-index: 1;
  background: #ededed;
}
.general {
  width: 511px;
}
.amounts {
  width: 232px;
  padding-left: 16px;
}
.rows {
  display: flex;
  flex-direction: column;
  gap: 7px;
}
.row {
  height: 22px;
  display: flex;
  align-items: center;
  position: relative;
}
.row.first {
  margin-bottom: -1px;
}
.m13 {
  margin-top: 6px;
}
.m9 {
  margin-top: 2px;
}
.m10 {
  margin-top: 3px;
}
.lab {
  width: 88px;
  flex: none;
  line-height: 14px;
  font-size: 9.8px;
  color: #8a8a8a;
  padding-top: 1px;
}
.lab.short {
  width: 72px;
}
.lab.blue {
  color: #4aace6;
}
.lab.nowrap {
  white-space: nowrap;
}
.lab.second {
  margin-left: 11px;
}
.q {
  font-size: 8.5px;
  line-height: 0;
  color: #d6c9ee;
  margin-left: 3px;
  vertical-align: 4px;
}
.inp {
  height: 22px;
  box-sizing: border-box;
  border: 1px solid #cbcbcb;
  background: #fff;
  display: flex;
  align-items: center;
  position: relative;
  width: 115px;
}
.inp.val {
  padding-left: 3px;
  color: #555;
}
.inp.grow {
  flex: 1;
}
.inp.w164 {
  width: 164px;
}
.inp.w129 {
  width: 128px;
}
.inp.ro {
  background: #ebebeb;
  border-color: #dcdcdc;
}
.inp.num {
  justify-content: flex-end;
  padding-right: 4px;
  color: #555;
}
.money {
  padding: 0 4px 0 5px;
  justify-content: space-between;
  color: #555;
}
.money em {
  font-style: normal;
  font-size: 8.5px;
  color: #999;
  margin-top: -3px;
}
.money b {
  font-weight: 400;
  font-size: 9.8px;
  margin-left: auto;
}
.inp.focus {
  border-color: #3daee0;
  border-radius: 2px;
}
.inp.bad {
  border-color: #ee8a8a;
  border-radius: 2px;
  box-shadow: 0 -1px 0 #d4d4d4;
  justify-content: flex-end;
  padding-right: 4px;
}
.inp.bad b {
  font-weight: 400;
}
.inp.bad .err-inline {
  position: absolute;
  left: 4px;
  top: 5px;
  margin: 0;
}
.inp.date {
  color: #aaa;
  padding-left: 4px;
}
.inp.date .caret {
  position: absolute;
  right: 5px;
  top: 6px;
}
.drop {
  position: absolute;
  right: 0;
  top: 0;
  bottom: 0;
  width: 11px;
  border-left: 1px solid #cbcbcb;
  background: #fff;
  display: flex;
  justify-content: center;
  padding-top: 6px;
  box-sizing: border-box;
}
.factory {
  margin: 0 9px 0 3px;
}
.err-inline {
  margin-left: 5px;
}
.cursor {
  width: 1px;
  height: 13px;
  background: #222;
  margin-left: 7px;
}
.chk {
  width: 13px;
  height: 13px;
  box-sizing: border-box;
  border: 1px solid #cfcfcf;
  border-radius: 2px;
  background: #fff;
  flex: none;
}
.parent-chk {
  margin-left: 11px;
}
.chk-text {
  margin-left: 4px;
  color: #8a8a8a;
  white-space: nowrap;
}
.chk-text.pro {
  width: 199px;
  flex: none;
}

.popup {
  position: absolute;
  left: 18px;
  top: 21px;
  width: 391px;
  height: 202px;
  background: #fff;
  box-shadow: 0 1px 4px rgba(0, 0, 0, 0.25);
  z-index: 10;
  display: flex;
}
.pop-list {
  flex: 1;
  padding: 1px 7px 0 6px;
}
.pop-item {
  height: 22.300px;
  display: flex;
  align-items: center;
  justify-content: space-between;
  color: #666;
  font-size: 9.8px;
}
.pop-code {
  font: 7.4px 'Liberation Mono', monospace;
  color: #aaa;
}
.pop-scroll {
  width: 17px;
  background: #f1f1f1;
  display: flex;
  flex-direction: column;
  justify-content: space-between;
  align-items: center;
  padding: 7px 0 9px;
  box-sizing: border-box;
}
.up,
.down {
  width: 0;
  height: 0;
  border-left: 3.500px solid transparent;
  border-right: 3.500px solid transparent;
}
.up {
  border-bottom: 4px solid #a0a0a0;
}
.down {
  border-top: 4px solid #a0a0a0;
}
.pop-side {
  position: absolute;
  left: 410px;
  top: 21px;
  width: 18px;
  z-index: 11;
  display: flex;
  flex-direction: column;
}
.side-btn {
  height: 19px;
  background: #fff;
  border: 1px solid #d8d8d8;
  border-radius: 2px;
  box-sizing: border-box;
  display: flex;
  align-items: center;
  justify-content: center;
}
.mini-tools {
  align-self: flex-end;
  margin: 0 0 3px 484px;
  display: flex;
  gap: 8px;
}
.tabbar {
  height: 21px;
  flex: none;
  margin-top: 6px;
  padding: 0 7px 0 3px;
  display: flex;
  justify-content: space-between;
  align-items: flex-start;
  box-sizing: border-box;
  border-bottom: 1px solid #cfcfcf;
}
.tabbtn {
  width: 57px;
  height: 21px;
  box-sizing: border-box;
  border: 1px solid #cfcfcf;
  border-bottom: 1px solid #ededed;
  border-radius: 3px 3px 0 0;
  text-align: center;
  line-height: 19px;
  color: #444;
  background: #ededed;
}
.tab-plus {
  margin-top: 1px;
}
.lower {
  flex: 1;
  display: flex;
  gap: 8px;
  padding: 5px 0 0 5px;
  min-height: 0;
  box-sizing: border-box;
}
.col-left {
  width: 471px;
  display: flex;
  flex-direction: column;
  gap: 10px;
}
.col-right {
  width: 232px;
  display: flex;
  flex-direction: column;
  gap: 10px;
}
.purchase,
.results {
  height: 125px;
}
.results,
.lease,
.warranty {
  padding-left: 16px;
}
.deprec {
  height: 171px;
  padding-top: 11px;
}
.thin {
  height: 30px;
  padding-top: 8px;
}
.thin .row {
  height: 15px;
}
.track {
  margin-top: 1px;
}
.lease {
  height: 31px;
}
.disposal,
.warranty {
  height: 39px;
  padding-top: 8px;
}
.disposal {
  margin-top: 1px;
  padding-top: 9px;
}
.bottom-tools {
  height: 20px;
  flex: none;
  display: flex;
  align-items: center;
  gap: 8px;
  margin-left: 728px;
}

/* edge sidebar */
.edge {
  flex: 1;
  display: flex;
  flex-direction: column;
  align-items: center;
  padding-top: 18px;
  gap: 24px;
}
.g-ball {
  width: 24px;
  height: 24px;
  margin: -3px 0;
  background: #fff;
  border-radius: 50%;
  display: flex;
  align-items: center;
  justify-content: center;
}
.edge-plus {
  margin-top: 6px;
}
.edge-foot {
  margin-top: auto;
  display: flex;
  flex-direction: column;
  align-items: center;
  gap: 27px;
  padding-bottom: 15px;
}
.edge-line {
  width: 28px;
  height: 1px;
  background: #9aaeb3;
  margin-bottom: -12px;
}
</style>
